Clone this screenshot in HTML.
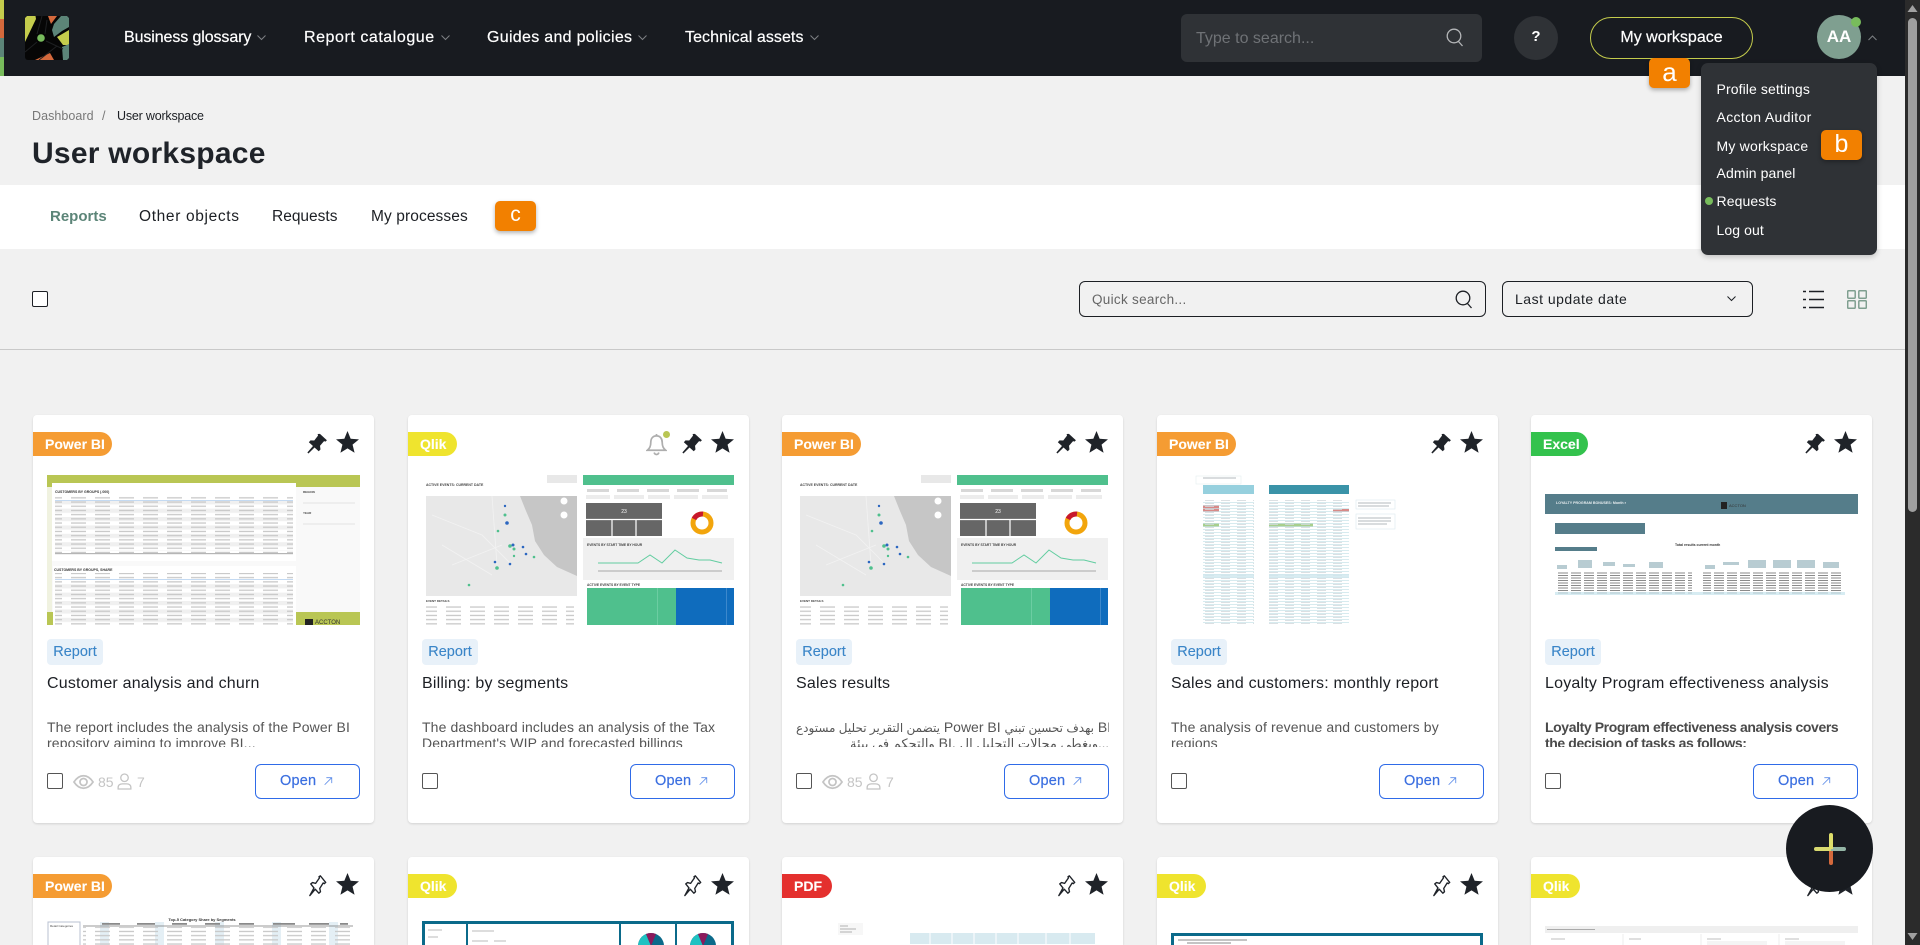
<!DOCTYPE html>
<html lang="en">
<head>
<meta charset="utf-8">
<title>User workspace</title>
<style>
html,body{margin:0;padding:0;width:1920px;height:945px;overflow:hidden;background:#f1f1f1;font-family:"Liberation Sans","DejaVu Sans",sans-serif;color:#1c1f24}
*{box-sizing:border-box}
.a{position:absolute}
.t{position:absolute;white-space:nowrap}
#page{position:absolute;left:0;top:0;width:1920px;height:945px;overflow:hidden}
.nav{color:#fff;font-size:16px;line-height:20px;top:28px;-webkit-text-stroke:.2px #fff}
.orange{position:absolute;background:#f28000;color:#fff;border-radius:5px;box-shadow:0 2px 4px rgba(0,0,0,.3);font-size:21px;line-height:28px;text-align:center}
.menu{color:#fff;font-size:14px;line-height:18px;left:1716.500px;letter-spacing:.1px}
.tab{font-size:15.5px;line-height:20px;top:207px;color:#1c1f24}
.card{position:absolute;width:341px;height:408px;background:#fff;border-radius:4px;box-shadow:0 1px 2px rgba(0,0,0,.13)}
.r2{height:88px;overflow:hidden;border-radius:4px 4px 0 0}
.badge{position:absolute;left:0;top:17px;height:24px;border-radius:0 12px 12px 0;color:#fff;font-weight:bold;font-size:14px;line-height:24px;padding-left:12px;-webkit-text-stroke:.1px #fff}
.thumb{position:absolute;left:14px;top:60px;width:313px;height:150px;overflow:hidden}
.r2 .thumb{height:28px}
.thumb svg{display:block;filter:blur(.35px)}
.tag{position:absolute;left:14px;top:224px;width:56px;height:26px;background:#e8f1f9;border-radius:4px;color:#3a85c8;font-size:14.5px;line-height:26px;text-align:center;-webkit-text-stroke:.1px #3a85c8}
.title{position:absolute;left:14px;top:259px;font-size:16px;line-height:20px;white-space:nowrap;color:#1c1f24;letter-spacing:.2px}
.desc{position:absolute;left:14px;top:304px;width:313px;height:28px;overflow:hidden;font-size:14px;line-height:16px;color:#555;white-space:nowrap;letter-spacing:.12px}
.desc span{line-height:0}
.cb{position:absolute;left:14px;top:358px;width:16px;height:16px;border:1px solid #555;border-radius:2px;background:#fff}
.open{position:absolute;right:14px;top:349px;width:105px;height:35px;border:1.2px solid #2f6be8;border-radius:6px;color:#3b6fe0;font-size:14.5px;line-height:33px;padding-left:24px;background:#fff;letter-spacing:.2px;-webkit-text-stroke:.2px #3b6fe0}
.open svg{position:absolute;left:67px;top:10px}
.ic{position:absolute;top:15px}
.stat{position:absolute;top:358px;font-size:14px;line-height:18px;color:#c4c4c4}
</style>
</head>
<body>
<div id="page">

<svg width="0" height="0" style="position:absolute">
<defs>
  <symbol id="pinF" viewBox="0 0 24 24"><path d="M15.2 1.5l7.6 6.9-1.5 1.6-1.6-.6-4.4 5 .5 4.1-1.9 2-4.6-4.2-6.6 6.6-1.2-1.1 6.1-7.1-4.5-4.1 1.8-2 4.1.1 4.1-5.3-.4-1.7z" fill="#1f2329"/></symbol>
  <symbol id="pinO" viewBox="0 0 24 24"><path d="M15.7 1.5L21.5 8.6 20 10 18.7 9.3 15 15.2l.8 3.6-1.8 1.6-3.9-4.4L4.2 23l4.5-8.4-3.5-4.3 1.9-1.5 3.4.9L14.700 3.700 14.200 2.400z" fill="none" stroke="#1f2329" stroke-width="1.5" stroke-linejoin="round"/></symbol>
  <symbol id="star" viewBox="0 0 24 23"><path d="M12 0l3.300 8.100 8.700.6-6.700 5.600 2.100 8.500L12 18.200 4.600 22.800l2.100-8.500L0 8.700l8.700-.6z" fill="#1f2329"/></symbol>
  <symbol id="arrow" viewBox="0 0 12 12"><path d="M2 10.500L10 2.500M4 2h6.500v6.500" fill="none" stroke="#5b8be8" stroke-width="1"/></symbol>
  <symbol id="eye" viewBox="0 0 22 16"><path d="M1 8C4 3.500 7.300 1.500 11 1.500S18 3.500 21 8c-3 4.500-6.300 6.500-10 6.500S4 12.500 1 8z" fill="none" stroke="#c4c4c4" stroke-width="1.800"/><circle cx="11" cy="8" r="3.700" fill="none" stroke="#c4c4c4" stroke-width="1.800"/></symbol>
  <symbol id="user" viewBox="0 0 16 18"><circle cx="8" cy="5" r="4" fill="none" stroke="#c4c4c4" stroke-width="1.400"/><path d="M1.200 17v-1.500c0-2.700 2-4 4.500-4h4.600c2.500 0 4.500 1.300 4.500 4V17z" fill="none" stroke="#c4c4c4" stroke-width="1.400"/></symbol>
  <symbol id="bell" viewBox="0 0 22 24"><path d="M11 3c-4 0-6 3-6 7 0 4-1 6-3.500 8h19C18 16 17 14 17 10c0-4-2-7-6-7zM8.500 20.500c.6 1.500 1.500 2 2.500 2s1.900-.5 2.500-2M11 1v2" fill="none" stroke="#aeaeae" stroke-width="1.800"/></symbol>
  <pattern id="t1" width="24" height="4.200" patternUnits="userSpaceOnUse"><rect width="15" height="1.300" y="1.200" fill="#c8c8c8"/></pattern>
  <pattern id="s1" width="10" height="8.400" patternUnits="userSpaceOnUse"><rect width="10" height="4.200" fill="#f0f0f0"/></pattern>
  <pattern id="x1" width="16" height="3" patternUnits="userSpaceOnUse"><rect width="16" height=".7" fill="#c6e2e8"/><rect x="2" y="1.200" width="9" height=".8" fill="#d2d9dc"/></pattern>
  <pattern id="z1" width="13" height="2.500" patternUnits="userSpaceOnUse"><rect width="10" height="1" fill="#8a8a8a"/></pattern>
  <symbol id="dash" viewBox="0 0 313 150">
    <rect width="313" height="150" fill="#fff"/>
    <text x="4" y="11" font-size="3.500" font-weight="bold" fill="#444" font-family="Liberation Sans">ACTIVE EVENTS: CURRENT DATE</text>
    <rect x="125" y="0" width="30" height="8" fill="#e8e8e8"/>
    <rect x="4" y="21" width="151" height="100" fill="#e8e8e8"/>
    <path d="M98 21H155V101L135 92 122 80 113 66 110 50 104 36z" fill="#c6c6c6"/>
    <path d="M10 40L60 60 90 90M30 90L80 70M70 21L75 90M20 70L70 100" stroke="#f2f2f2" stroke-width=".8" fill="none"/>
    <g fill="#4fc08d"><circle cx="83" cy="40" r="1.500"/><circle cx="76" cy="56" r="1.300"/><circle cx="88" cy="71" r="1.800"/><circle cx="92" cy="74" r="1.500"/><circle cx="75" cy="93" r="1.800"/><circle cx="92" cy="81" r="1.200"/><circle cx="47" cy="110" r="1.300"/><circle cx="112" cy="82" r="1.300"/></g>
    <g fill="#2b66c0"><circle cx="83" cy="31" r="1.200"/><circle cx="85" cy="48" r="1.800"/><circle cx="91" cy="70" r="1.500"/><circle cx="101" cy="72" r="1.300"/><circle cx="104" cy="79" r="1.300"/><circle cx="73" cy="87" r="1.300"/><circle cx="88" cy="89" r="1.300"/></g>
    <circle cx="142" cy="26" r="3.500" fill="#fff"/><circle cx="142" cy="40" r="3.500" fill="#fff"/>
    <text x="4" y="127" font-size="3" font-weight="bold" fill="#444" font-family="Liberation Sans">EVENT DETAILS</text>
    <rect x="4" y="129" width="148" height="21" fill="url(#t1)"/>
    <rect x="161" y="0" width="151" height="10" fill="#4fc08d"/>
    <rect x="164" y="28" width="76" height="33" fill="#666"/>
    <path d="M164 44.500H240M190 45V61M214 45V61" stroke="#fff" stroke-width="1.200"/>
    <text x="202" y="38" font-size="5" fill="#fff" text-anchor="middle" font-family="Liberation Sans">23</text>
    <circle cx="280" cy="48" r="9" fill="none" stroke="#f2a50c" stroke-width="5"/>
    <path d="M272 44a9 9 0 0 1 9-5" fill="none" stroke="#c8182c" stroke-width="5"/>
    <rect x="161" y="63" width="151" height="42" fill="#f0f0f0"/>
    <path d="M176 88H216L228 80 240 88 253 75 265 83 277 85 288 85 300 88" fill="none" stroke="#62cda0" stroke-width="1"/>
    <g fill="#ccc"><rect x="176" y="95" width="124" height="2"/></g>
    <text x="165" y="71" font-size="3.300" font-weight="bold" fill="#444" font-family="Liberation Sans">EVENTS BY START TIME BY HOUR</text>
    <text x="165" y="111" font-size="3.300" font-weight="bold" fill="#444" font-family="Liberation Sans">ACTIVE EVENTS BY EVENT TYPE</text>
    <rect x="165" y="113" width="89" height="37" fill="#4fc08d"/>
    <rect x="254" y="113" width="58" height="37" fill="#0f6cbd"/>
    <rect x="235" y="113" width=".6" height="37" fill="#7fd6b0"/><rect x="304" y="113" width=".6" height="37" fill="#5a9ad6"/>
    <g fill="#d8d8d8"><rect x="165" y="14" width="22" height="3"/><rect x="195" y="14" width="22" height="3"/><rect x="225" y="14" width="22" height="3"/><rect x="255" y="14" width="22" height="3"/><rect x="285" y="14" width="20" height="3"/></g>
    <g fill="#ececec"><rect x="164" y="20" width="24" height="4"/><rect x="192" y="20" width="30" height="4"/><rect x="226" y="20" width="22" height="4"/><rect x="252" y="20" width="24" height="4"/><rect x="280" y="20" width="26" height="4"/></g>
  </symbol>
</defs>
</svg>

<!-- Header -->
<div class="a" style="left:0;top:0;width:1920px;height:76px;background:#181b20"></div>
<div class="a" style="left:0;top:0;width:4px;height:19px;background:#c4cc4c"></div>
<div class="a" style="left:0;top:19px;width:4px;height:19px;background:#d4693c"></div>
<div class="a" style="left:0;top:38px;width:4px;height:19px;background:#5c8578"></div>
<div class="a" style="left:0;top:57px;width:4px;height:19px;background:#78bc5c"></div>

<svg class="a" style="left:25px;top:16px" width="44" height="44" viewBox="0 0 44 44">
  <rect width="44" height="44" rx="3" fill="#060606"/>
  <path d="M2 0H10.500L11 3 0 26V2z" fill="#c4cc4c"/>
  <path d="M23 0H32L26 8z" fill="#d4693c"/>
  <path d="M36 0H42L44 2V11L37 15 29 21 27 14 29 8z" fill="#5c8578"/>
  <path d="M32 21L44 14V29L38 29z" fill="#c4cc4c"/>
  <path d="M37 31L44 28V42L42 44H38z" fill="#5c8578"/>
  <path d="M10 44L25 37 29 44z" fill="#d4693c"/>
  <circle cx="16" cy="22" r="3.800" fill="#78bc5c"/>
  <path d="M0 36L12 26M21 25L38 33M12 18L17 0M20 18L22 4M14 44L32 30" stroke="#1e2022" stroke-width="1" fill="none"/>
</svg>

<span class="t nav" style="left:124px;letter-spacing:-.1px">Business glossary</span>
<span class="t nav" style="left:304px;letter-spacing:.55px">Report catalogue</span>
<span class="t nav" style="left:487px;letter-spacing:.3px">Guides and policies</span>
<span class="t nav" style="left:685px;letter-spacing:.07px">Technical assets</span>
<svg class="a" style="left:257px;top:35px" width="9" height="6"><path d="M.5.5L4.500 4.500 8.500.5" fill="none" stroke="#7d8084"/></svg>
<svg class="a" style="left:441px;top:35px" width="9" height="6"><path d="M.5.5L4.500 4.500 8.500.5" fill="none" stroke="#7d8084"/></svg>
<svg class="a" style="left:638px;top:35px" width="9" height="6"><path d="M.5.5L4.500 4.500 8.500.5" fill="none" stroke="#7d8084"/></svg>
<svg class="a" style="left:810px;top:35px" width="9" height="6"><path d="M.5.5L4.500 4.500 8.500.5" fill="none" stroke="#7d8084"/></svg>

<div class="a" style="left:1181px;top:14px;width:301px;height:48px;background:#2f3236;border-radius:6px"></div>
<span class="t" style="left:1196px;top:29px;font-size:16px;line-height:20px;color:#6f7276">Type to search...</span>
<svg class="a" style="left:1446px;top:28px" width="18" height="19"><circle cx="8" cy="8" r="6.800" fill="none" stroke="#b4b6b8" stroke-width="1.300"/><path d="M12.500 13.500L16.500 18" stroke="#b4b6b8" stroke-width="1.300"/></svg>

<div class="a" style="left:1514px;top:16px;width:44px;height:44px;border-radius:50%;background:#2f3236"></div>
<span class="t" style="left:1514px;top:27px;width:44px;text-align:center;color:#fff;font-weight:bold;font-size:15px;line-height:20px">?</span>

<div class="a" style="left:1590px;top:17px;width:163px;height:42px;border:1.500px solid #c4cc4c;border-radius:21px"></div>
<span class="t" style="left:1590px;top:28px;width:163px;text-align:center;color:#fff;font-size:16px;line-height:20px;-webkit-text-stroke:.2px #fff">My workspace</span>

<div class="orange" style="left:1649px;top:58px;width:41px;height:30px;font-size:26px">a</div>

<div class="a" style="left:1817px;top:15px;width:44px;height:44px;border-radius:50%;background:#7f9f90"></div>
<span class="t" style="left:1817px;top:27px;width:44px;text-align:center;color:#fff;font-weight:bold;font-size:17px;line-height:20px">AA</span>
<div class="a" style="left:1851px;top:17px;width:10px;height:10px;border-radius:50%;background:#78bc5c"></div>
<svg class="a" style="left:1868px;top:35px" width="9" height="6"><path d="M.5 5L4.500 1 8.500 5" fill="none" stroke="#7d8084"/></svg>

<!-- Page heading -->
<span class="t" style="left:32px;top:106.500px;font-size:12.500px;line-height:18px;color:#787878;letter-spacing:.05px">Dashboard</span>
<span class="t" style="left:102px;top:106.500px;font-size:12.500px;line-height:18px;color:#787878">/</span>
<span class="t" style="left:117px;top:106.500px;font-size:12.500px;line-height:18px;color:#1c1f24;letter-spacing:-.2px">User workspace</span>
<span class="t" style="left:32px;top:135px;font-size:30px;line-height:38px;font-weight:bold;color:#1f2329;letter-spacing:.25px">User workspace</span>

<!-- Tabs -->
<div class="a" style="left:0;top:185px;width:1905px;height:64px;background:#fff"></div>
<span class="t tab" style="left:50px;color:#5c8578;font-weight:bold;font-size:15px">Reports</span>
<span class="t tab" style="left:139px;letter-spacing:.65px">Other objects</span>
<span class="t tab" style="left:272px">Requests</span>
<span class="t tab" style="left:371px;letter-spacing:.1px">My processes</span>
<div class="orange" style="left:495px;top:201px;width:41px;height:30px">c</div>

<!-- Toolbar -->
<div class="a" style="left:32px;top:291px;width:16px;height:16px;border:1.300px solid #1c1f24;border-radius:2px;background:#fff"></div>
<div class="a" style="left:1079px;top:281px;width:407px;height:36px;border:1.200px solid #1c1f24;border-radius:6px"></div>
<span class="t" style="left:1092px;top:290.500px;font-size:13.500px;line-height:18px;color:#666;letter-spacing:.3px">Quick search...</span>
<svg class="a" style="left:1455px;top:290px" width="18" height="19"><circle cx="8" cy="8" r="6.800" fill="none" stroke="#1c1f24" stroke-width="1.300"/><path d="M12.500 13.500L16.500 18" stroke="#1c1f24" stroke-width="1.300"/></svg>
<div class="a" style="left:1502px;top:281px;width:251px;height:36px;border:1.200px solid #1c1f24;border-radius:6px"></div>
<span class="t" style="left:1515px;top:290px;font-size:14px;line-height:18px;color:#1c1f24;letter-spacing:.5px">Last update date</span>
<svg class="a" style="left:1727px;top:296px" width="9" height="6"><path d="M.5.5L4.500 4.500 8.500.5" fill="none" stroke="#1c1f24"/></svg>
<svg class="a" style="left:1803px;top:290px" width="21" height="19"><path d="M0 1.500H3M6 1.500H21M0 9.500H3M6 9.500H21M0 17.500H3M6 17.500H21" stroke="#1c1f24" stroke-width="1.500"/></svg>
<svg class="a" style="left:1847px;top:290px" width="20" height="19" fill="none" stroke="#7f9f90" stroke-width="1.500"><rect x=".7" y=".7" width="7.500" height="7.500" rx=".8"/><rect x="11.800" y=".7" width="7.500" height="7.500" rx=".8"/><rect x=".7" y="10.800" width="7.500" height="7.500" rx=".8"/><rect x="11.800" y="10.800" width="7.500" height="7.500" rx=".8"/></svg>
<div class="a" style="left:0;top:349px;width:1905px;height:1px;background:#c9c9c9"></div>

<!-- Row 1 -->
<div class="card" style="left:33px;top:415px">
  <div class="badge" style="width:79px;background:#f59c33">Power BI</div>
  <svg class="ic" style="left:273px;top:17px" width="22" height="23"><use href="#pinF"/></svg>
  <svg class="ic" style="left:303px;top:16px" width="23" height="22"><use href="#star"/></svg>
  <div class="thumb"><svg width="313" height="150" viewBox="0 0 313 150">
    <rect width="313" height="150" fill="#f9f9f9"/>
    <rect width="313" height="12" fill="#b9c654"/>
    <rect y="137" width="313" height="13" fill="#b9c654"/>
    <rect x="0" y="12" width="5" height="125" fill="#f0f2e0"/>
    <rect x="5" y="8" width="244" height="78" fill="#fff"/>
    <rect x="6" y="91" width="243" height="59" fill="#fff"/>
    <text x="8" y="18" font-size="3.500" font-weight="bold" fill="#333" font-family="Liberation Sans">CUSTOMERS BY GROUPS (.000)</text>
    <text x="7" y="96" font-size="3.500" font-weight="bold" fill="#333" font-family="Liberation Sans">CUSTOMERS BY GROUPS, SHARE</text>
    <rect x="8" y="26" width="238" height="50" fill="url(#s1)"/>
    <rect x="8" y="106" width="238" height="44" fill="url(#s1)"/>
    <rect x="8" y="20" width="238" height="58" fill="url(#t1)"/>
    <rect x="8" y="98" width="238" height="52" fill="url(#t1)"/>
    <rect x="8" y="25" width="238" height=".6" fill="#9cc2e8"/><rect x="8" y="104" width="238" height=".6" fill="#9cc2e8"/>
    <rect x="8" y="78" width="238" height="1.200" fill="#b5b5b5"/>
    <text x="256" y="18" font-size="3" font-weight="bold" fill="#444" font-family="Liberation Sans">REGION</text>
    <text x="256" y="39" font-size="3" font-weight="bold" fill="#444" font-family="Liberation Sans">YEAR</text>
    <path d="M256 28H308M256 49H308" stroke="#e4e4e4"/>
    <rect x="258" y="144" width="8" height="6" fill="#222"/>
    <text x="268" y="149" font-size="6" fill="#333" font-family="Liberation Sans">ACCTON</text>
  </svg></div>
  <div class="tag">Report</div>
  <div class="title">Customer analysis and churn</div>
  <div class="desc">The report includes the analysis of the Power BI<br>repository aiming to improve BI...</div>
  <div class="cb"></div>
  <svg class="a" style="left:40px;top:359px" width="21" height="16"><use href="#eye"/></svg>
  <span class="stat" style="left:65px">85</span>
  <svg class="a" style="left:84px;top:358px" width="15" height="17"><use href="#user"/></svg>
  <span class="stat" style="left:104px">7</span>
  <div class="open">Open<svg width="10" height="12"><use href="#arrow"/></svg></div>
</div>

<div class="card" style="left:408px;top:415px">
  <div class="badge" style="width:49px;background:#efe42e">Qlik</div>
  <svg class="ic" style="left:238px;top:18px" width="21" height="23"><use href="#bell"/></svg>
  <div class="a" style="left:255px;top:16px;width:7px;height:7px;border-radius:50%;background:#b9c654"></div>
  <svg class="ic" style="left:273px;top:17px" width="22" height="23"><use href="#pinF"/></svg>
  <svg class="ic" style="left:303px;top:16px" width="23" height="22"><use href="#star"/></svg>
  <div class="thumb"><svg width="313" height="150"><use href="#dash"/></svg></div>
  <div class="tag">Report</div>
  <div class="title">Billing: by segments</div>
  <div class="desc">The dashboard includes an analysis of the Tax<br>Department's WIP and forecasted billings</div>
  <div class="cb"></div>
  <div class="open">Open<svg width="10" height="12"><use href="#arrow"/></svg></div>
</div>

<div class="card" style="left:782px;top:415px">
  <div class="badge" style="width:79px;background:#f59c33">Power BI</div>
  <svg class="ic" style="left:273px;top:17px" width="22" height="23"><use href="#pinF"/></svg>
  <svg class="ic" style="left:303px;top:16px" width="23" height="22"><use href="#star"/></svg>
  <div class="thumb"><svg width="313" height="150"><use href="#dash"/></svg></div>
  <div class="tag">Report</div>
  <div class="title">Sales results</div>
  <div class="desc" style="text-align:right;font-size:14px;letter-spacing:0"><span style="font-size:12px">يتضمن التقرير تحليل مستودع</span> Power BI <span style="font-size:12px">بهدف تحسين تبني</span> BI<br><span style="font-size:13px">والتحكم في بيئة</span> BI. <span style="font-size:13px">ويغطي مجالات التحليل ال...</span></div>
  <div class="cb"></div>
  <svg class="a" style="left:40px;top:359px" width="21" height="16"><use href="#eye"/></svg>
  <span class="stat" style="left:65px">85</span>
  <svg class="a" style="left:84px;top:358px" width="15" height="17"><use href="#user"/></svg>
  <span class="stat" style="left:104px">7</span>
  <div class="open">Open<svg width="10" height="12"><use href="#arrow"/></svg></div>
</div>

<div class="card" style="left:1157px;top:415px">
  <div class="badge" style="width:79px;background:#f59c33">Power BI</div>
  <svg class="ic" style="left:273px;top:17px" width="22" height="23"><use href="#pinF"/></svg>
  <svg class="ic" style="left:303px;top:16px" width="23" height="22"><use href="#star"/></svg>
  <div class="thumb"><svg width="313" height="150" viewBox="0 0 313 150">
    <rect width="313" height="150" fill="#fff"/>
    <rect x="32" y="10" width="51" height="9" fill="#96d0de"/>
    <rect x="98" y="10" width="80" height="9" fill="#3a93a8"/>
    <rect x="32" y="30" width="16" height="7" fill="#d88a88"/>
    <rect x="162" y="34" width="16" height="3" fill="#d88a88"/>
    <rect x="32" y="48" width="16" height="4" fill="#a8cf8c"/>
    <rect x="98" y="48" width="44" height="4" fill="#a8cf8c"/>
    <rect x="32" y="25" width="51" height="125" fill="url(#x1)"/>
    <rect x="98" y="25" width="80" height="125" fill="url(#x1)"/>
    <rect x="32" y="99" width="51" height="4" fill="#cfe7ee" opacity=".8"/><rect x="98" y="99" width="80" height="4" fill="#cfe7ee" opacity=".8"/>
    <rect x="25" y="1" width="45" height="8" fill="#fff" stroke="#e4eef0" stroke-width=".6"/>
    <rect x="185" y="25" width="39" height="9" fill="#fff" stroke="#dceaee" stroke-width=".6"/>
    <rect x="185" y="39" width="39" height="15" fill="#fff" stroke="#dceaee" stroke-width=".6"/>
    <path d="M32 3H65M187 28H220M187 31H218M187 43H220M187 46H220M187 49H216" stroke="#9aa4a8" stroke-width=".8"/>
  </svg></div>
  <div class="tag">Report</div>
  <div class="title">Sales and customers: monthly report</div>
  <div class="desc">The analysis of revenue and customers by<br>regions</div>
  <div class="cb"></div>
  <div class="open">Open<svg width="10" height="12"><use href="#arrow"/></svg></div>
</div>

<div class="card" style="left:1531px;top:415px">
  <div class="badge" style="width:57px;background:#33c24d">Excel</div>
  <svg class="ic" style="left:273px;top:17px" width="22" height="23"><use href="#pinF"/></svg>
  <svg class="ic" style="left:303px;top:16px" width="23" height="22"><use href="#star"/></svg>
  <div class="thumb"><svg width="313" height="150" viewBox="0 0 313 150">
    <rect width="313" height="150" fill="#fff"/>
    <rect y="19" width="313" height="20" fill="#557d8a"/>
    <text x="11" y="29" font-size="3.600" font-weight="bold" fill="#e8eef0" font-family="Liberation Sans">LOYALTY PROGRAM BONUSES: Month r</text>
    <rect x="176" y="27" width="6" height="7" fill="#222"/>
    <text x="184" y="32" font-size="4" fill="#333" font-family="Liberation Sans">ACCTON</text>
    <rect x="10" y="48" width="90" height="11" fill="#557d8a"/>
    <text x="130" y="71" font-size="3.500" font-weight="bold" fill="#333" font-family="Liberation Sans">Total results current month</text>
    <rect x="10" y="72" width="42" height="4" fill="#557d8a"/>
    <g fill="#b8ccd2"><rect x="12" y="90" width="10" height="4"/><rect x="33" y="85" width="14" height="8"/><rect x="58" y="87" width="12" height="4"/><rect x="78" y="89" width="12" height="3"/><rect x="104" y="87" width="14" height="6"/><rect x="160" y="90" width="10" height="4"/><rect x="178" y="87" width="16" height="3"/><rect x="203" y="85" width="18" height="8"/><rect x="228" y="85" width="18" height="8"/><rect x="252" y="85" width="18" height="8"/><rect x="278" y="87" width="16" height="6"/></g>
    <rect x="12" y="97" width="135" height="22" fill="url(#z1)"/>
    <rect x="158" y="97" width="140" height="22" fill="url(#z1)"/>
    <rect x="10" y="117" width="290" height="3" fill="#c6e4ec" opacity=".7"/>
  </svg></div>
  <div class="tag">Report</div>
  <div class="title">Loyalty Program effectiveness analysis</div>
  <div class="desc" style="font-weight:bold;letter-spacing:-.4px;color:#4a4a4a">Loyalty Program effectiveness analysis covers<br>the decision of tasks as follows:</div>
  <div class="cb"></div>
  <div class="open">Open<svg width="10" height="12"><use href="#arrow"/></svg></div>
</div>

<!-- Row 2 -->
<div class="card r2" style="left:33px;top:857px">
  <div class="badge" style="width:79px;background:#f59c33">Power BI</div>
  <svg class="ic" style="left:273px;top:17px" width="22" height="23"><use href="#pinO"/></svg>
  <svg class="ic" style="left:303px;top:16px" width="23" height="22"><use href="#star"/></svg>
  <div class="thumb"><svg width="313" height="28" viewBox="0 0 313 28">
    <rect width="313" height="28" fill="#fff"/>
    <text x="155" y="4" font-size="4" font-weight="bold" fill="#333" text-anchor="middle" font-family="Liberation Sans">Top-5 Category Share by Segments</text>
    <rect x="1" y="5" width="32" height="45" fill="#fff" stroke="#b8c0d0" stroke-width="1"/>
    <text x="3" y="10" font-size="3" fill="#444" font-family="Liberation Sans">Retail Categories</text>
    <g fill="#e4eff5"><rect x="53" y="5" width="9" height="23"/><rect x="108" y="5" width="9" height="23"/><rect x="168" y="5" width="9" height="23"/><rect x="225" y="5" width="9" height="23"/><rect x="282" y="5" width="9" height="23"/></g>
    <rect x="36" y="10" width="270" height="18" fill="url(#t1)"/>
    <path d="M36 9H306" stroke="#777" stroke-width=".7"/>
    <g fill="#8a8a8a"><rect x="55" y="6" width="18" height="1.800"/><rect x="90" y="6" width="18" height="1.800"/><rect x="125" y="6" width="15" height="1.800"/><rect x="158" y="6" width="15" height="1.800"/><rect x="192" y="6" width="15" height="1.800"/><rect x="226" y="6" width="22" height="1.800"/><rect x="262" y="6" width="20" height="1.800"/><rect x="293" y="6" width="8" height="1.800"/></g>
  </svg></div>
</div>

<div class="card r2" style="left:408px;top:857px">
  <div class="badge" style="width:49px;background:#efe42e">Qlik</div>
  <svg class="ic" style="left:273px;top:17px" width="22" height="23"><use href="#pinO"/></svg>
  <svg class="ic" style="left:303px;top:16px" width="23" height="22"><use href="#star"/></svg>
  <div class="thumb"><svg width="313" height="28" viewBox="0 0 313 28">
    <rect width="313" height="28" fill="#fff"/>
    <rect y="4" width="312" height="24" fill="#0b6a8a"/>
    <rect x="3" y="7" width="41" height="21" fill="#fff"/>
    <rect x="46" y="7" width="151" height="21" fill="#fff"/>
    <rect x="199" y="7" width="54" height="21" fill="#fff"/>
    <rect x="255" y="7" width="54" height="21" fill="#fff"/>
    <path d="M50 14H72M50 24H66M72 24H84M6 13H20M6 20H16" stroke="#bbb" stroke-width="1"/>
    <circle cx="229" cy="29" r="13" fill="#0b6a8a"/><path d="M229 29L219 37A13 13 0 0 1 224 17z" fill="#1fc2c2"/><path d="M229 29L224 17A13 13 0 0 1 234 17z" fill="#8b1a5c"/>
    <circle cx="281" cy="29" r="13" fill="#0b6a8a"/><path d="M281 29L271 37A13 13 0 0 1 276 17z" fill="#1fc2c2"/><path d="M281 29L276 17A13 13 0 0 1 286 17z" fill="#8b1a5c"/>
  </svg></div>
</div>

<div class="card r2" style="left:782px;top:857px">
  <div class="badge" style="width:50px;background:#e4302e">PDF</div>
  <svg class="ic" style="left:273px;top:17px" width="22" height="23"><use href="#pinO"/></svg>
  <svg class="ic" style="left:303px;top:16px" width="23" height="22"><use href="#star"/></svg>
  <div class="thumb"><svg width="313" height="28" viewBox="0 0 313 28">
    <rect width="313" height="28" fill="#fff"/>
    <rect x="42" y="6" width="25" height="12" fill="#f7f7f7"/>
    <path d="M44 9H52M44 12H60M44 15H56" stroke="#999" stroke-width=".8"/>
    <rect x="114" y="16" width="185" height="11" fill="#d8eaf0"/>
    <path d="M134 16V27M156 16V27M178 16V27M200 16V27M222 16V27M250 16V27M274 16V27" stroke="#fff" stroke-width="1"/>
  </svg></div>
</div>

<div class="card r2" style="left:1157px;top:857px">
  <div class="badge" style="width:49px;background:#efe42e">Qlik</div>
  <svg class="ic" style="left:273px;top:17px" width="22" height="23"><use href="#pinO"/></svg>
  <svg class="ic" style="left:303px;top:16px" width="23" height="22"><use href="#star"/></svg>
  <div class="thumb"><svg width="313" height="28" viewBox="0 0 313 28">
    <rect width="313" height="28" fill="#fff"/>
    <rect y="16" width="312" height="12" fill="#0b6a8a"/>
    <rect x="3" y="19" width="306" height="9" fill="#fff"/>
    <path d="M7 23H76M16 26H60" stroke="#888" stroke-width="1"/>
  </svg></div>
</div>

<div class="card r2" style="left:1531px;top:857px">
  <div class="badge" style="width:49px;background:#efe42e">Qlik</div>
  <svg class="ic" style="left:273px;top:17px" width="22" height="23"><use href="#pinO"/></svg>
  <svg class="ic" style="left:303px;top:16px" width="23" height="22"><use href="#star"/></svg>
  <div class="thumb"><svg width="313" height="28" viewBox="0 0 313 28">
    <rect width="313" height="28" fill="#fff"/>
    <rect y="9" width="313" height="7" fill="#efefef"/>
    <path d="M2 12.500H50" stroke="#aaa" stroke-width="1"/>
    <path d="M78 17V28M156 17V28M234 17V28" stroke="#eee"/>
    <path d="M6 22H20M84 22H96M162 22H176M240 22H254" stroke="#aaa" stroke-width=".8"/>
    <rect x="162" y="24" width="60" height="4" fill="#f4f4f4"/><rect x="240" y="24" width="60" height="4" fill="#f4f4f4"/>
  </svg></div>
</div>

<!-- FAB -->
<div class="a" style="left:1786px;top:805px;width:87px;height:87px;border-radius:50%;background:#181b20"></div>
<div class="a" style="left:1814px;top:847px;width:17px;height:4px;background:#d8da70;border-radius:2px 0 0 2px"></div>
<div class="a" style="left:1831px;top:847px;width:15px;height:4px;background:#93b5a5;border-radius:0 2px 2px 0"></div>
<div class="a" style="left:1829px;top:833px;width:3.500px;height:16px;background:#dede6a;border-radius:2px 2px 0 0"></div>
<div class="a" style="left:1829px;top:851px;width:3.500px;height:14px;background:#d4693c;border-radius:0 0 2px 2px"></div>

<!-- Dropdown -->
<div class="a" style="left:1701px;top:63px;width:176px;height:192px;background:#2f3236;border-radius:7px;box-shadow:0 2px 6px rgba(0,0,0,.2)"></div>
<span class="t menu" style="top:80px">Profile settings</span>
<span class="t menu" style="top:108px;letter-spacing:.35px">Accton Auditor</span>
<span class="t menu" style="top:136.500px;letter-spacing:.2px">My workspace</span>
<span class="t menu" style="top:164px">Admin panel</span>
<span class="t menu" style="top:192px">Requests</span>
<span class="t menu" style="top:220.500px">Log out</span>
<div class="a" style="left:1705px;top:197px;width:8px;height:8px;border-radius:50%;background:#78bc5c"></div>
<div class="orange" style="left:1821px;top:130px;width:41px;height:30px;font-size:25px">b</div>

<!-- Scrollbar -->
<div class="a" style="left:1905px;top:0;width:15px;height:945px;background:#2b2b2b"></div>
<svg class="a" style="left:1905px;top:0" width="15" height="15"><path d="M7.500 5L12.500 12H2.500z" fill="#a0a0a0"/></svg>
<div class="a" style="left:1908px;top:18px;width:9px;height:494px;background:#9f9f9f;border-radius:5px"></div>
<svg class="a" style="left:1905px;top:930px" width="15" height="15"><path d="M2.500 3H12.500L7.500 10z" fill="#a0a0a0"/></svg>

</div>
</body>
</html>
